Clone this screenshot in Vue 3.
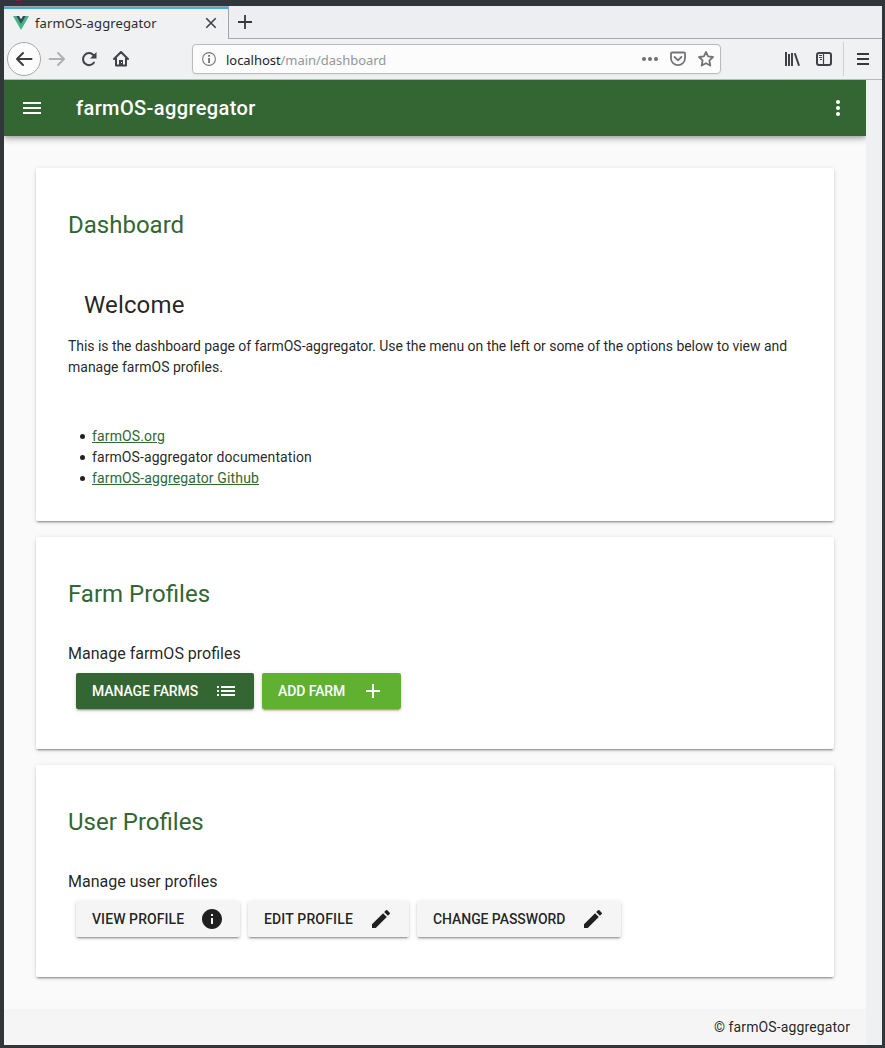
<script setup>
const userActions = [
  { label: 'View Profile', icon: 'info', width: 164, spacing: 0.08 },
  { label: 'Edit Profile', icon: 'edit', width: 161, spacing: 0.16 },
  { label: 'Change Password', icon: 'edit', width: 204, spacing: -0.07 },
]
const icons = {
  info: 'M12 2C6.48 2 2 6.48 2 12s4.48 10 10 10 10-4.48 10-10S17.52 2 12 2zm1 15h-2v-6h2v6zm0-8h-2V7h2v2z',
  edit: 'M3 17.25V21h3.75L17.81 9.94l-3.75-3.75L3 17.25zM20.71 7.04a.996.996 0 0 0 0-1.41l-2.34-2.34a.996.996 0 0 0-1.41 0l-1.83 1.83 3.75 3.75 1.83-1.83z',
  list: 'M3 13h2v-2H3v2zm0 4h2v-2H3v2zm0-8h2V7H3v2zm4 4h14v-2H7v2zm0 4h14v-2H7v2zM7 7v2h14V7H7z',
  add: 'M19 13h-6v6h-2v-6H5v-2h6V5h2v6h6v2z',
}
</script>

<template>
  <div class="desktop">
    <i class="titlebar-mark"></i>
    <div class="window">
      <div class="tabs">
        <div class="tab">
          <svg class="favicon" width="16" height="16" viewBox="0 0 16 16">
            <path d="M0 1h3.4L8 9l4.600-8H16L8 15z" fill="#41b883" />
            <path d="M3.200 1h2.900L8 4.200 9.900 1h2.900L8 9.300z" fill="#35495e" />
          </svg>
          <span class="tab-title">farmOS-aggregator</span>
          <svg class="close" width="12" height="12" viewBox="0 0 12 12"><path d="M1.300 1.300l9.400 9.400M10.700 1.300l-9.400 9.400" stroke="#404247" stroke-width="1.600" /></svg>
        </div>
        <div class="tab-rest">
          <svg width="14" height="14" viewBox="0 0 14 14"><path d="M7 0v14M0 7h14" stroke="#38393d" stroke-width="1.800" /></svg>
        </div>
      </div>

      <div class="nav">
        <div class="back">
          <svg width="18" height="16" viewBox="0 0 18 16" fill="none" stroke="#3b3d41" stroke-width="2" stroke-linecap="round" stroke-linejoin="round"><path d="M16.500 8H2M8 2L2 8l6 6" /></svg>
        </div>
        <svg class="forward" width="18" height="16" viewBox="0 0 18 16" fill="none" stroke="#b0b1b4" stroke-width="2" stroke-linecap="round" stroke-linejoin="round"><path d="M1.500 8H16M10 2l6 6-6 6" /></svg>
        <svg class="reload" width="16" height="16" viewBox="0 0 16 16">
          <path d="M13 11.500A6 6 0 1 1 12.400 4" fill="none" stroke="#404247" stroke-width="2" stroke-linecap="round" />
          <path d="M15.500 1v6.500H9z" fill="#404247" />
        </svg>
        <svg class="home" width="16" height="16" viewBox="0 0 16 16">
          <path d="M1 8l7-7 7 7M3 7.500V14.500h10V7.500" fill="none" stroke="#404247" stroke-width="2" stroke-linejoin="round" stroke-linecap="round" />
          <path d="M6 9h4v6H6z" fill="#404247" /><path d="M8 11h1v1H8z" fill="#fff" />
        </svg>
        <div class="address">
          <svg class="site-info" width="14" height="14" viewBox="0 0 14 14"><circle cx="7" cy="7" r="6.400" fill="none" stroke="#77787a" stroke-width="1.100" /><path d="M6.200 6h1.700v5H6.200zM6.200 3h1.700v1.800H6.200z" fill="#69696b" /></svg>
          <span class="url"><b>localhost</b>/main/dashboard</span>
          <svg width="16" height="16" viewBox="0 0 16 16" fill="#6f7073"><circle cx="2" cy="8" r="2" /><circle cx="8" cy="8" r="2" /><circle cx="14" cy="8" r="2" /></svg>
          <svg width="16" height="16" viewBox="0 0 16 16" fill="none" stroke="#737477" stroke-width="1.800" stroke-linecap="round" stroke-linejoin="round"><path d="M1 2.200Q1 1.500 2 1.500h12q1 0 1 .7V7.500a7 6.600 0 0 1-14 0z" /><path d="M4.600 6L8 9.300 11.400 6" /></svg>
          <svg width="16" height="16" viewBox="0 0 16 16" fill="none" stroke="#737477" stroke-width="1.800" stroke-linejoin="round"><path d="M8 1l2.100 4.400 4.900.6-3.600 3.400.9 5.100L8 12.200 3.700 14.500l.9-5.100L1 6l4.900-.6z" /></svg>
        </div>
        <svg class="library" width="16" height="16" viewBox="0 0 16 16" fill="#404247"><path d="M1 1h2v14H1zM4 3h2v12H4zM7 2h2v13H7zM9.800 2.500l1.900-.6 4.300 12.500-1.900.6z" /></svg>
        <svg class="sidebar" width="16" height="16" viewBox="0 0 16 16"><rect x="1" y="2" width="14" height="12" rx="2" fill="none" stroke="#404247" stroke-width="2" /><path d="M7.500 2v12" stroke="#404247" stroke-width="1.200" /><path d="M3 4.500h3M3 6.500h3M4 8.500h2" stroke="#404247" /></svg>
        <div class="menu">
          <svg width="12" height="12" viewBox="0 0 12 12"><path d="M0 1h12M0 6h12M0 11h12" stroke="#38393d" stroke-width="2" /></svg>
        </div>
      </div>

      <div class="viewport">
        <div class="app">
          <header class="toolbar">
            <svg width="24" height="24" viewBox="0 0 24 24" fill="#fff"><path d="M3 18h18v-2H3v2zm0-5h18v-2H3v2zm0-7v2h18V6H3z" /></svg>
            <h1>farmOS-aggregator</h1>
            <svg width="24" height="24" viewBox="0 0 24 24" fill="#fff"><circle cx="12" cy="6" r="2" /><circle cx="12" cy="12" r="2" /><circle cx="12" cy="18" r="2" /></svg>
          </header>

          <main>
            <section class="card dashboard">
              <h2>Dashboard</h2>
              <h3>Welcome</h3>
              <p><span class="lead">This is the dashboard page of farmOS-aggregator. Use the menu on the left or some of the options below to view and</span><br>manage farmOS profiles.</p>
              <ul>
                <li><a>farmOS.org</a></li>
                <li class="plain">farmOS-aggregator documentation</li>
                <li><a>farmOS-aggregator Github</a></li>
              </ul>
            </section>

            <section class="card">
              <h2>Farm Profiles</h2>
              <div class="subheading">Manage farmOS profiles</div>
              <div class="buttons">
                <button class="btn primary">Manage Farms<svg width="24" height="24" viewBox="0 0 24 24"><path :d="icons.list" /></svg></button>
                <button class="btn secondary">Add Farm<svg width="24" height="24" viewBox="0 0 24 24"><path :d="icons.add" /></svg></button>
              </div>
            </section>

            <section class="card">
              <h2>User Profiles</h2>
              <div class="subheading">Manage user profiles</div>
              <div class="buttons">
                <button v-for="a in userActions" :key="a.label" class="btn" :style="{ width: a.width + 'px', letterSpacing: a.spacing + 'px' }">
                  {{ a.label }}<svg width="24" height="24" viewBox="0 0 24 24"><path :d="icons[a.icon]" /></svg>
                </button>
              </div>
            </section>
          </main>

          <footer>© farmOS-aggregator</footer>
        </div>
      </div>
    </div>
  </div>
</template>

<style>
body { margin: 0; background: #31363b; }
</style>

<style scoped>
* { box-sizing: border-box; }
svg { flex: none; display: block; }
.desktop { position: relative; height: 1048px; padding: 6px 3px 3px 4px; background: #31363b; overflow: hidden; }
.titlebar-mark { position: absolute; left: 16px; top: 0; width: 5px; height: 1px; background: #7c2536; }
.window { height: 1039px; display: flex; flex-direction: column; background: #eff0f1; }
.tabs { height: 33px; display: flex; font: 13px "Noto Sans", sans-serif; }
.tab { width: 225px; display: flex; align-items: center; padding: 0 11px 0 9px; border-right: 1px solid #a5a6a9; background: linear-gradient(#a5a6a9 1px, #3daee9 1px, #3daee9 3px, #f0f1f3 3px); color: #2b2c30; }
.tab-title { margin-left: 6px; flex: 1; white-space: nowrap; letter-spacing: .12px; }
.tab-rest { flex: 1; padding: 9px 0 0 9px; background: #edeef1; border-bottom: 1px solid #a5a6a9; }
.nav { height: 41px; display: flex; align-items: center; padding-left: 3px; background: #f0f1f3; border-bottom: 1px solid #b7b8ba; }
.back { width: 34px; height: 34px; border: 1px solid #a8a9ab; border-radius: 50%; background: #fcfcfc; display: flex; align-items: center; justify-content: center; }
.forward { margin-left: 7px; }
.reload { margin-left: 15px; }
.home { margin-left: 16px; }
.address { width: 529px; height: 30px; margin-left: 63px; padding: 0 6px 0 9px; display: flex; align-items: center; gap: 12px; border: 1px solid #b9babc; border-radius: 4px; background: #fcfcfc; box-shadow: 0 1px 3px rgba(0, 0, 0, .05); }
.url { flex: 1; margin-left: -2px; padding-top: 2px; font: 13px "Noto Sans", sans-serif; letter-spacing: -.04px; color: #959698; }
.url b { font-weight: 400; color: #232427; }
.library { margin-left: 63px; }
.sidebar { margin-left: 16px; }
.menu { height: 34px; margin-left: 11px; padding-left: 13px; border-left: 1px solid #d1d2d4; display: flex; align-items: center; }
.viewport { flex: 1; padding-right: 16px; background: #eff0f1; }
.app { height: 965px; display: flex; flex-direction: column; background: #fafafa; color: rgba(0, 0, 0, .87); font: 14px/21px Roboto, sans-serif; overflow: hidden; }
.toolbar { height: 56px; flex: none; display: flex; align-items: center; padding: 0 16px; background: #336633; color: #fff; box-shadow: 0 2px 4px -1px rgba(0, 0, 0, .2), 0 4px 5px rgba(0, 0, 0, .14), 0 1px 10px rgba(0, 0, 0, .12); }
h1 { flex: 1; margin: 0 0 0 32px; font-size: 20px; line-height: 30px; font-weight: 500; letter-spacing: .4px; }
main { flex: 1; padding: 32px; display: flex; flex-direction: column; gap: 16px; }
.card { height: 212px; padding: 41px 32px 0; background: #fff; border-radius: 2px; box-shadow: 0 3px 1px -2px rgba(0, 0, 0, .2), 0 2px 2px rgba(0, 0, 0, .14), 0 1px 5px rgba(0, 0, 0, .12); }
.dashboard { height: 353px; }
h2, h3 { margin: 0; font-size: 24px; line-height: 32px; font-weight: 400; }
h2 { color: #336633; }
h3 { margin: 48px 0 0 16px; letter-spacing: .14px; }
p { margin: 15px 0 0; white-space: nowrap; }
.lead { letter-spacing: -.048px; }
ul { margin: 48px 0 0; padding: 0; list-style: none; letter-spacing: .14px; }
.plain { letter-spacing: .09px; }
li { display: flex; align-items: center; }
li::before { content: ""; width: 5px; height: 5px; margin: 0 7px 0 12px; border-radius: 50%; background: currentColor; }
a { color: #336633; text-decoration: underline; }
.subheading { margin-top: 32px; font-size: 16px; line-height: 24px; }
.buttons { display: flex; gap: 8px; margin: 7px 0 0 8px; }
.btn { height: 36px; padding: 0 16px; border: 0; border-radius: 2px; display: flex; align-items: center; justify-content: space-between; background: #f5f5f5; color: rgba(0, 0, 0, .87); font: 500 14px Roboto, sans-serif; text-transform: uppercase; white-space: nowrap; box-shadow: 0 3px 1px -2px rgba(0, 0, 0, .2), 0 2px 2px rgba(0, 0, 0, .14), 0 1px 5px rgba(0, 0, 0, .12); }
.btn svg { fill: currentColor; }
.primary, .secondary { color: #fff; letter-spacing: -.08px; }
.primary { width: 178px; background: #336633; }
.secondary { width: 139px; background: #60b032; }
footer { height: 36px; flex: none; padding-right: 16px; text-align: right; line-height: 36px; letter-spacing: .12px; background: #f5f5f5; }
</style>
